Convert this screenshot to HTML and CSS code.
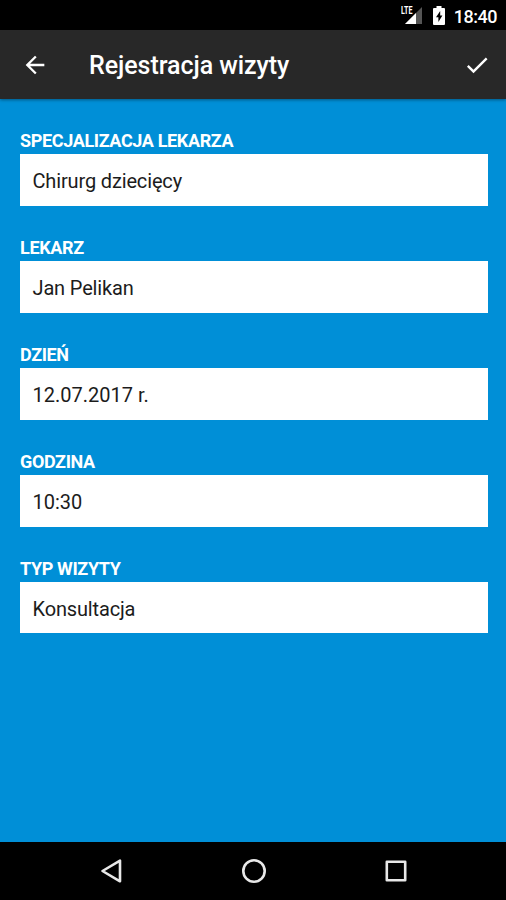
FILE: index.html
```
<!DOCTYPE html>
<html lang="pl">
  <head>
    <meta charset="UTF-8" />
    <meta name="viewport" content="width=device-width, initial-scale=1.0" />
    <title>Rejestracja wizyty</title>
    <link rel="stylesheet" href="styles.css">
  </head>
  <body>
    <div class="status">
      <svg class="signal" width="22" height="20" viewBox="0 0 22 20">
        <path d="M21 2v17H4z" fill="#555" />
        <path d="M15 8v11H4z" fill="#fff" />
        <text x="0" y="9" textLength="11.5" lengthAdjust="spacingAndGlyphs">LTE</text>
      </svg>
      <svg class="battery" width="12" height="19" viewBox="0 0 12 19">
        <path d="M3.5 0h5v2H11q1 0 1 1v15q0 1-1 1H1q-1 0-1-1V3q0-1 1-1h2.5z" fill="#fff" />
        <path d="M7.2 5L3 11.2h2.4V16l4-6.6H7.2z" fill="#000" />
      </svg>
      <div class="time">18:40</div>
    </div>

    <div class="header">
      <svg width="28" height="28" viewBox="0 0 24 24">
        <path d="M20 11H7.83l5.59-5.59L12 4l-8 8 8 8 1.41-1.41L7.83 13H20z" />
      </svg>
      <div class="title">Rejestracja wizyty</div>
      <svg width="28" height="28" viewBox="0 0 24 24">
        <path d="M9 16.17L4.83 12l-1.42 1.41L9 19 21 7l-1.41-1.41z" />
      </svg>
    </div>

    <div class="form">
      <div class="field">
        <div class="label">SPECJALIZACJA LEKARZA</div>
        <div class="value">Chirurg dziecięcy</div>
      </div>
      <div class="field">
        <div class="label">LEKARZ</div>
        <div class="value">Jan Pelikan</div>
      </div>
      <div class="field">
        <div class="label">DZIEŃ</div>
        <div class="value date">12.07.2017 r.</div>
      </div>
      <div class="field">
        <div class="label">GODZINA</div>
        <div class="value date">10:30</div>
      </div>
      <div class="field">
        <div class="label">TYP WIZYTY</div>
        <div class="value">Konsultacja</div>
      </div>
    </div>

    <div class="nav">
      <svg width="24" height="26" viewBox="0 0 24 26">
        <path d="M21 2.7v20.6L3.5 13z" />
      </svg>
      <svg width="24" height="26" viewBox="0 0 24 26">
        <circle cx="12" cy="13" r="10.7" />
      </svg>
      <svg width="24" height="26" viewBox="0 0 24 26">
        <path d="M2.8 3.8h18.4v18.4H2.8z" />
      </svg>
    </div>
  </body>
</html>
```
FILE: styles.css
```
body {
  margin: 0;
  height: 900px;
  display: flex;
  flex-direction: column;
  overflow: hidden;
  font-family: Roboto, sans-serif;
  background: #008fd7;
}

.status {
  box-sizing: border-box;
  height: 30px;
  padding-right: 9px;
  display: flex;
  justify-content: flex-end;
  align-items: center;
  background: #000;
  color: #fff;
}
.signal {
  margin-right: 10px;
}
.signal text {
  font-size: 11px;
  font-weight: bold;
  fill: #fff;
}
.battery {
  margin-right: 9px;
}
.time {
  padding-top: 2px;
  font-size: 18px;
  font-weight: 500;
  letter-spacing: -0.5px;
}

.header {
  box-sizing: border-box;
  height: 69px;
  padding: 0 15px 0 21px;
  display: flex;
  align-items: center;
  background: #282828;
  color: #fff;
  box-shadow: 0 1px 3px rgba(0, 0, 0, 0.4);
}
.header svg {
  fill: #fff;
}
.title {
  flex: 1;
  padding-top: 2px;
  margin-left: 40px;
  font-size: 25px;
  font-weight: 500;
  letter-spacing: -0.05px;
}

.form {
  flex: 1;
  padding: 32px 18.5px 0 20px;
}
.field {
  margin-bottom: 32px;
}
.label {
  height: 23px;
  line-height: 20px;
  font-size: 18px;
  font-weight: bold;
  letter-spacing: -0.36px;
  color: #fff;
}
.value {
  height: 52px;
  padding-left: 12.5px;
  line-height: 54px;
  font-size: 20px;
  letter-spacing: -0.15px;
  background: #fff;
  color: #1c1c1c;
}
.value.date {
  letter-spacing: 0;
}
.field:last-child .value {
  height: 51px;
}

.nav {
  height: 58px;
  padding: 0 98px 0 99px;
  display: flex;
  justify-content: space-between;
  align-items: center;
  background: #000;
}
.nav svg {
  fill: none;
  stroke: #e8e8e8;
  stroke-width: 2.6;
  stroke-linejoin: round;
}
```
